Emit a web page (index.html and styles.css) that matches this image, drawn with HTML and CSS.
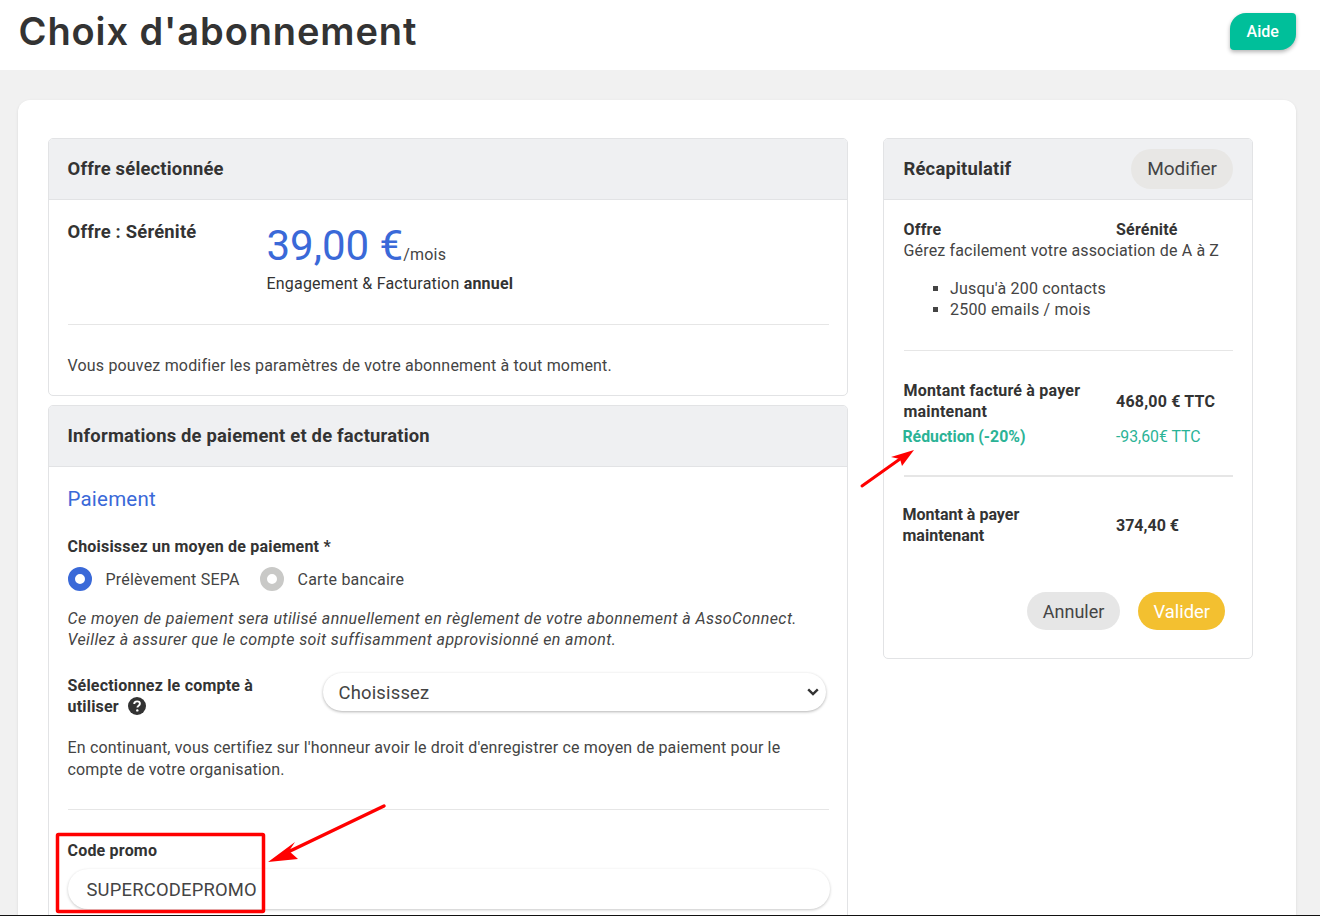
FILE: index.html
```html
<!DOCTYPE html>
<html lang="fr">
<head>
<meta charset="utf-8">
<title>Choix d'abonnement</title>
<link rel="stylesheet" href="styles.css">
</head>
<body>
<header class="topbar">
  <h1>Choix d'abonnement</h1>
  <a class="help">Aide</a>
</header>
<main class="sheet">
  <div class="left">
    <section class="panel">
      <h2 class="panel-head">Offre sélectionnée</h2>
      <div class="panel-body offer">
        <div class="offer-row">
          <strong class="offer-name">Offre : Sérénité</strong>
          <div class="offer-price">
            <div class="price-line"><span class="price">39,00 €</span><span class="per">/mois</span></div>
            <div class="billing">Engagement &amp; Facturation <b>annuel</b></div>
          </div>
        </div>
        <hr class="rule rule-offer">
        <p class="note">Vous pouvez modifier les paramètres de votre abonnement à tout moment.</p>
      </div>
    </section>
    <section class="panel panel-pay">
      <h2 class="panel-head">Informations de paiement et de facturation</h2>
      <div class="panel-body pay">
        <h3 class="pay-title">Paiement</h3>
        <div class="label">Choisissez un moyen de paiement *</div>
        <div class="radios">
          <span class="radio on"></span><span class="radio-text">Prélèvement SEPA</span>
          <span class="radio off"></span><span class="radio-text">Carte bancaire</span>
        </div>
        <p class="hint">Ce moyen de paiement sera utilisé annuellement en règlement de votre abonnement à AssoConnect.<br>Veillez à assurer que le compte soit suffisamment approvisionné en amont.</p>
        <div class="account">
          <div class="label account-label">Sélectionnez le compte à<br>utiliser
            <svg class="qmark" viewBox="0 0 18 18" width="18" height="18"><circle cx="9" cy="9" r="9" fill="#333"/><path d="M6.2 7c0-1.6 1.2-2.6 2.9-2.6 1.6 0 2.8 1 2.8 2.3 0 2-2.5 2-2.5 3.7" fill="none" stroke="#fff" stroke-width="1.9"/><circle cx="9.3" cy="13.4" r="1.2" fill="#fff"/></svg>
          </div>
          <div class="select"><span>Choisissez</span>
            <svg viewBox="0 0 12 8" width="12" height="8"><path d="M1.2 1.3 6 6l4.8-4.7" fill="none" stroke="#333" stroke-width="2.4"/></svg>
          </div>
        </div>
        <p class="certify">En continuant, vous certifiez sur l'honneur avoir le droit d'enregistrer ce moyen de paiement pour le compte de votre organisation.</p>
        <hr class="rule rule-pay">
        <div class="label">Code promo</div>
        <div class="promo">SUPERCODEPROMO</div>
      </div>
    </section>
  </div>
  <aside class="panel right">
    <div class="panel-head recap-head"><h2>Récapitulatif</h2><a class="btn btn-grey">Modifier</a></div>
    <div class="panel-body recap">
      <div class="two"><b>Offre</b><b>Sérénité</b></div>
      <div class="tagline">Gérez facilement votre association de A à Z</div>
      <ul>
        <li>Jusqu'à 200 contacts</li>
        <li>2500 emails / mois</li>
      </ul>
      <hr class="rule rule-a">
      <div class="two mid"><b>Montant facturé à payer maintenant</b><b>468,00 € TTC</b></div>
      <div class="two green"><b>Réduction (-20%)</b><span>-93,60€ TTC</span></div>
      <hr class="rule rule-b">
      <div class="two mid total"><b>Montant à payer maintenant</b><b>374,40 €</b></div>
      <div class="actions"><a class="btn btn-cancel">Annuler</a><a class="btn btn-ok">Valider</a></div>
    </div>
  </aside>
</main>
<svg class="marks" viewBox="0 0 1320 916" width="1320" height="916">
  <rect x="57.5" y="834.5" width="206" height="77" fill="none" stroke="#f00" stroke-width="3.5" rx="1"/>
  <path d="M384 806 288 852" stroke="#f00" stroke-width="3.5" stroke-linecap="round"/>
  <path d="M268 862 295 842 289 851 298 859Z" fill="#f00"/>
  <path d="M862 486 900 459" stroke="#f00" stroke-width="3" stroke-linecap="round"/>
  <path d="M914 450 891 457 900 459 902 466Z" fill="#f00"/>
</svg>
<div class="edge"></div>
</body>
</html>
```
FILE: styles.css
```css
* { box-sizing: border-box; }
html, body { margin: 0; height: 916px; overflow: hidden; }
body { position: relative; background: #f1f1f1; color: #333; font: 16px/21px Roboto, sans-serif; letter-spacing: .2px; }
h1, h2, h3, p, ul { margin: 0; }
.topbar { height: 70px; background: #fff; display: flex; align-items: center; justify-content: space-between; padding: 0 24px 0 18.5px; }
h1 { font: 600 38px/1 Inter, sans-serif; letter-spacing: .9px; color: #333; margin-top: -8px; }
.help { width: 66.5px; height: 37px; margin-top: -7px; background: #00bf9a; color: #fff; font-weight: 500; letter-spacing: 0; display: flex; align-items: center; justify-content: center; border-radius: 16px 4px 16px 4px; box-shadow: 0 2px 4px rgba(0,0,0,.3); }
.sheet { height: 816px; overflow: hidden; margin: 30px 24px 0 18px; padding: 38px 43px 0 30px; background: #fff; border-radius: 12px 12px 0 0; box-shadow: 0 1px 3px rgba(0,0,0,.1); display: flex; gap: 35px; align-items: flex-start; }
.left { width: 800px; flex: none; display: flex; flex-direction: column; gap: 9px; }
.panel { border: 1px solid #e2e3e5; border-radius: 5px; background: #fff; overflow: hidden; }
.panel-pay { height: 530px; flex: none; }
.panel-head { height: 61px; margin: 0; padding: 0 19px 0 18.5px; display: flex; align-items: center; background: #eff0f2; border-bottom: 1px solid #e2e3e5; font-size: 18.4px; font-weight: 700; line-height: 1; }
b, strong { font-weight: 700; }
.rule { border: 0; border-top: 1px solid #e6e6e6; margin: 0; }
.panel-body { padding: 0 18px 0 18.5px; }
.offer { padding-top: 20px; padding-bottom: 19px; }
.offer-row { display: flex; }
.offer-name { width: 199px; font-size: 18.4px; line-height: 23px; }
.price-line { display: flex; align-items: baseline; height: 44px; margin-top: 4px; }
.price { font-size: 42px; line-height: 44px; color: #3a69d8; letter-spacing: 0; }
.per { color: #444; }
.billing { margin-top: 5px; }
.rule-offer { margin-top: 30px; }
.note { margin-top: 30px; color: #444; letter-spacing: .18px; }
.pay-title { font-size: 20.5px; font-weight: 400; line-height: 24px; color: #3a69d8; margin-top: 20px; }
.label { font-weight: 700; }
.pay-title + .label { margin-top: 25px; }
.radios { display: flex; align-items: center; margin-top: 10px; height: 24px; color: #444; }
.radio { width: 24px; height: 24px; border-radius: 50%; flex: none; }
.radio.on { border: 7px solid #3a69d8; }
.radio.off { border: 7px solid #c9c9c7; }
.radio-text { margin-left: 14px; margin-right: 20px; }
.hint { margin-top: 17px; font-style: italic; color: #444; letter-spacing: .4px; }
.account { display: flex; margin-top: 25px; }
.account-label { width: 255px; flex: none; line-height: 21px; }
.qmark { vertical-align: -3px; margin-left: 5px; }
.select { width: 503px; height: 38px; margin-top: -2px; padding: 0 7px 0 16px; border-radius: 19px; background: #fff; box-shadow: 0 1px 3px rgba(0,0,0,.3); display: flex; align-items: center; justify-content: space-between; font-size: 18.4px; color: #444; }
.certify { margin-top: 20px; color: #444; line-height: 22px; letter-spacing: .16px; }
.rule-pay { margin-top: 28px; }
.rule-pay + .label { margin-top: 30px; }
.promo { width: 762px; height: 40px; margin-top: 8px; padding-left: 19px; border-radius: 20px; background: #fff; box-shadow: 0 1px 3px rgba(0,0,0,.22); display: flex; align-items: center; font-size: 18.4px; color: #444; }
.right { width: 370px; flex: none; height: 521px; }
.recap-head { justify-content: space-between; padding: 0 19px 0 19.5px; }
.recap-head h2 { font: inherit; }
.btn { height: 38px; padding: 0 15px; border-radius: 20px; display: inline-flex; align-items: center; font-size: 18.4px; font-weight: 400; letter-spacing: 0; }
.btn-grey { height: 40px; padding: 0 16px; font-size: 19px; background: #e8e7e5; color: #444; margin-top: -1px; }
.recap { padding: 19px 19px 0 19.5px; color: #444; }
.recap b { color: #333; }
.tagline { letter-spacing: .16px; }
.two { display: grid; grid-template-columns: 212.5px 1fr; }
.two > :first-child { padding-right: 20px; }
.recap ul { list-style: square; padding-left: 46.5px; margin-top: 17px; }
.rule-a { margin-top: 30px; }
.mid { align-items: center; margin-top: 29px; }
.green { color: #2bb396; margin-top: 4px; font-size: 15.8px; letter-spacing: 0; }
.green b { color: #2bb396; margin-left: -1px; }
.rule-b { margin-top: 28px; border-top: 2px solid #e6e6e6; }
.total { margin-top: 27px; letter-spacing: 0; }
.total > :first-child { margin-left: -1px; }
.actions { display: flex; justify-content: flex-end; gap: 18px; margin-top: 46px; padding-right: 8px; }
.btn-cancel { padding: 0 16px; font-size: 18px; background: #e6e6e6; color: #444; }
.btn-ok { background: #f3c030; color: #fff; }
.marks { position: absolute; left: 0; top: 0; pointer-events: none; }
.edge { position: absolute; left: 0; right: 0; bottom: 0; height: 1px; background: #111; }
```
